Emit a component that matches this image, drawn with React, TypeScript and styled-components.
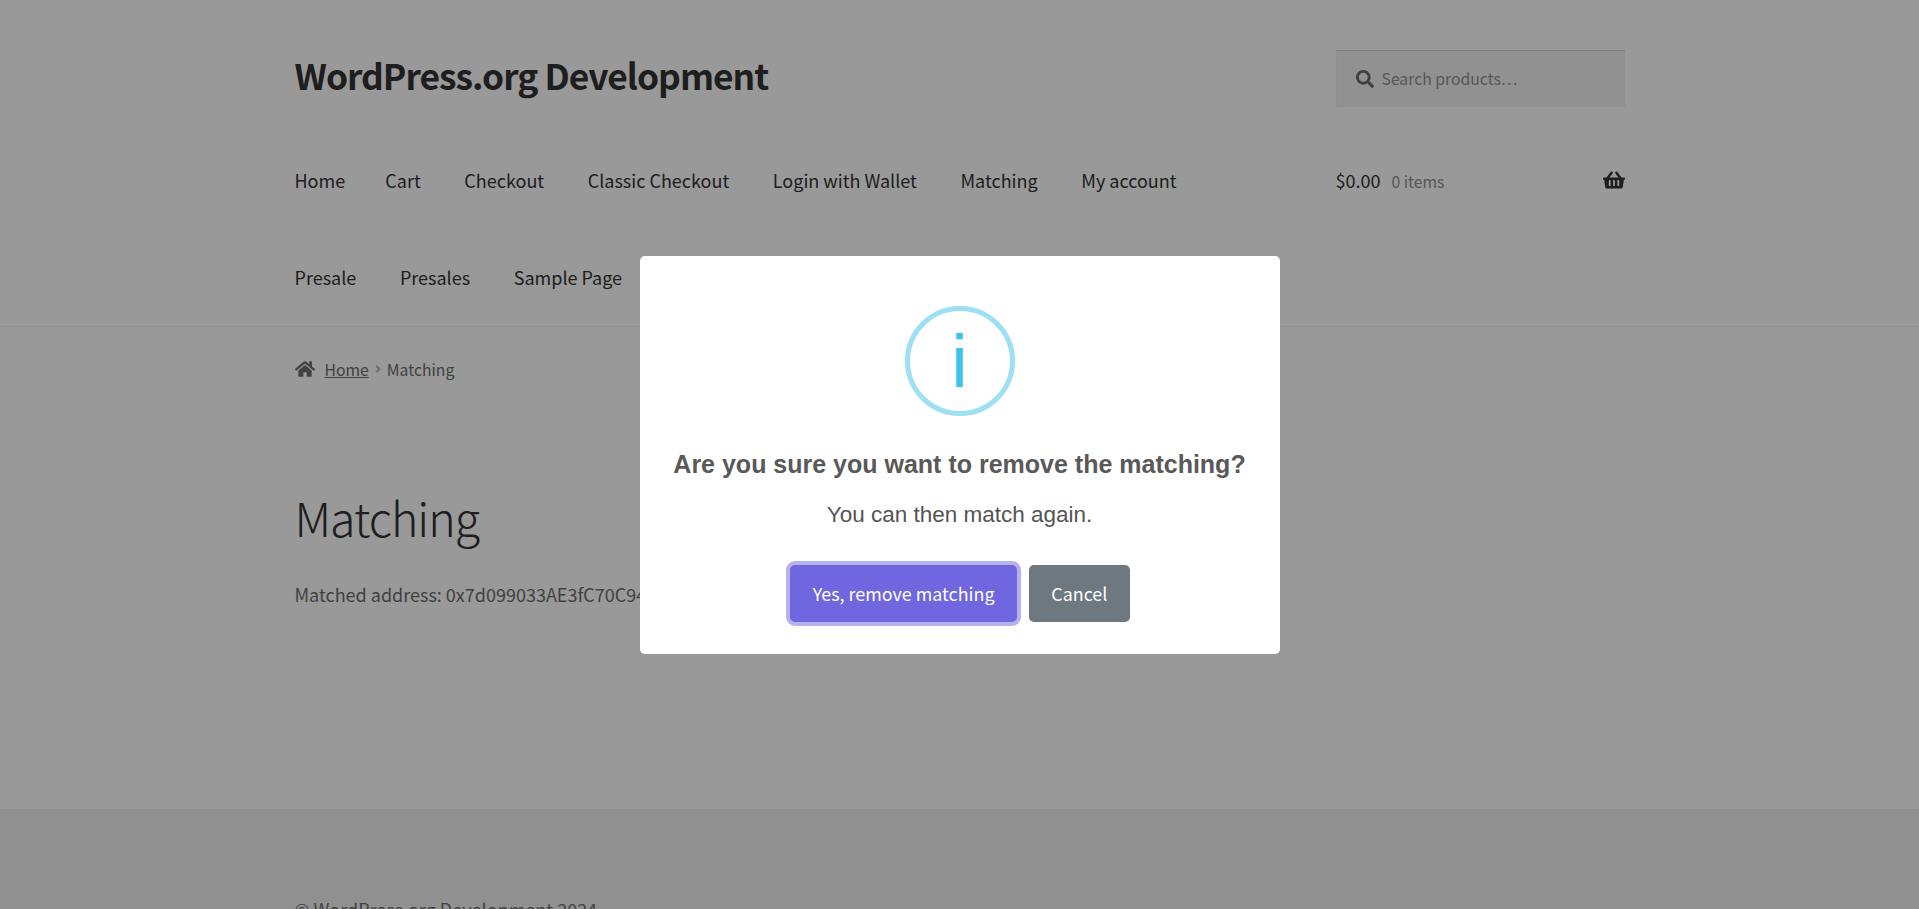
import styled, { createGlobalStyle } from "styled-components";
import { FaAngleRight, FaHome, FaSearch, FaShoppingBasket } from "react-icons/fa";

const GlobalStyle = createGlobalStyle`
  html, body {
    margin: 0;
    height: 100%;
    overflow: hidden;
    background: #fff;
    font-family: "Noto Sans CJK SC", "Noto Sans", sans-serif;
  }
`;

const Wrap = styled.div`
  width: 1330px;
  margin: 0 auto;
`;

const SiteHeader = styled.header`
  height: 327px;
  box-sizing: border-box;
  border-bottom: 1px solid rgba(0, 0, 0, 0.05);
`;

const HeaderRow = styled(Wrap)`
  display: flex;
  justify-content: space-between;
`;

const TopRow = styled(HeaderRow)`
  height: 132px;
  padding-top: 50px;
  box-sizing: border-box;
`;

const SiteTitle = styled.div`
  font-size: 35.4px;
  font-weight: 700;
  line-height: 50px;
  color: #333;
  letter-spacing: -1px;
`;

const SearchBox = styled.div`
  width: 289px;
  height: 57px;
  box-sizing: border-box;
  padding-left: 20px;
  display: flex;
  align-items: center;
  gap: 8px;
  background: #f2f2f2;
  box-shadow: inset 0 1px 1px rgba(0, 0, 0, 0.125);
  color: #6d6d6d;
  svg {
    width: 18px;
    height: 18px;
  }
`;

const Placeholder = styled.span`
  padding-bottom: 1px;
  color: #909090;
  font-size: 15.75px;
`;

const Menu = styled.nav`
  width: 910px;
  display: flex;
  flex-wrap: wrap;
  column-gap: 43.6px;
`;

const MenuLink = styled.a`
  height: 97px;
  line-height: 96px;
  font-size: 18px;
  color: #333;
  &:first-child {
    margin-right: -3.4px;
  }
`;

const Cart = styled.div`
  width: 289px;
  height: 96px;
  display: flex;
  align-items: center;
  font-size: 18px;
  color: #333;
  svg {
    margin-left: auto;
    width: 22px;
    height: 20px;
  }
`;

const CartCount = styled.span`
  margin-left: 11px;
  padding-top: 2px;
  font-size: 15.75px;
  color: #909090;
`;

const Breadcrumb = styled(Wrap)`
  display: flex;
  align-items: center;
  height: 24px;
  padding-top: 30px;
  font-size: 15.75px;
  color: #6d6d6d;
`;

const HomeIcon = styled(FaHome)`
  width: 20px;
  height: 18px;
  margin-right: 10px;
`;

const CrumbLink = styled.a`
  text-decoration: underline;
`;

const CrumbSep = styled(FaAngleRight)`
  width: 8px;
  height: 12px;
  margin: 0 5px;
  opacity: 0.5;
`;

const Main = styled(Wrap)`
  height: 428px;
  box-sizing: border-box;
  padding-top: 101px;
`;

const PageTitle = styled.h1`
  margin: 0;
  font-size: 46.5px;
  font-weight: 300;
  line-height: 70px;
  letter-spacing: -1px;
  color: #333;
`;

const BodyText = styled.p`
  margin: 28px 0 0;
  font-size: 18px;
  line-height: 28px;
  color: #6d6d6d;
`;

const Footer = styled.footer`
  height: 200px;
  background: #f0f0f0;
`;

const FooterText = styled(Wrap)`
  padding-top: 88px;
  font-size: 18px;
  line-height: 24px;
  color: #6d6d6d;
`;

const Overlay = styled.div`
  position: fixed;
  inset: 0;
  display: flex;
  justify-content: center;
  padding-top: 256px;
  background: rgba(0, 0, 0, 0.4);
`;

const Dialog = styled.div`
  width: 640px;
  height: 398px;
  box-sizing: border-box;
  padding-top: 50px;
  display: flex;
  flex-direction: column;
  align-items: center;
  background: #fff;
  border-radius: 5px;
  font-family: "Liberation Sans", Arial, sans-serif;
`;

const InfoIcon = styled.div`
  width: 110px;
  height: 110px;
  box-sizing: border-box;
  border: 5px solid #9de0f6;
  border-radius: 50%;
  display: flex;
  align-items: center;
  justify-content: center;
  color: #3fc3ee;
  font-size: 75px;
  line-height: 1;
`;

const DialogTitle = styled.h2`
  margin: 29px 0 0;
  font-size: 25px;
  font-weight: 700;
  line-height: 38px;
  color: #595959;
`;

const DialogText = styled.div`
  margin-top: 15px;
  font-size: 22.5px;
  line-height: 34px;
  color: #545454;
`;

const Actions = styled.div`
  margin-top: 33px;
  margin-left: 1px;
  display: flex;
  gap: 12px;
`;

const ActionButton = styled.button<{ $bg: string; $focused?: boolean }>`
  height: 57px;
  padding: 0 22.4px 2px;
  border: 0;
  border-radius: 5px;
  background: ${(p) => p.$bg};
  color: #fff;
  font-family: "Noto Sans CJK SC", "Noto Sans", sans-serif;
  font-size: 17.9px;
  box-shadow: ${(p) => (p.$focused ? "0 0 0 4px rgba(112, 102, 224, 0.5)" : "none")};
`;

const navItems = [
  "Home",
  "Cart",
  "Checkout",
  "Classic Checkout",
  "Login with Wallet",
  "Matching",
  "My account",
  "Presale",
  "Presales",
  "Sample Page",
];

export default function App() {
  return (
    <>
      <GlobalStyle />
      <SiteHeader>
        <TopRow>
          <SiteTitle>WordPress.org Development</SiteTitle>
          <SearchBox>
            <FaSearch />
            <Placeholder>Search products…</Placeholder>
          </SearchBox>
        </TopRow>
        <HeaderRow>
          <Menu>
            {navItems.map((item) => (
              <MenuLink key={item}>{item}</MenuLink>
            ))}
          </Menu>
          <Cart>
            $0.00
            <CartCount>0 items</CartCount>
            <FaShoppingBasket />
          </Cart>
        </HeaderRow>
      </SiteHeader>
      <Breadcrumb>
        <HomeIcon />
        <CrumbLink>Home</CrumbLink>
        <CrumbSep />
        Matching
      </Breadcrumb>
      <Main>
        <PageTitle>Matching</PageTitle>
        <BodyText>Matched address: 0x7d099033AE3fC70C94</BodyText>
      </Main>
      <Footer>
        <FooterText>© WordPress.org Development 2024</FooterText>
      </Footer>
      <Overlay>
        <Dialog>
          <InfoIcon>i</InfoIcon>
          <DialogTitle>Are you sure you want to remove the matching?</DialogTitle>
          <DialogText>You can then match again.</DialogText>
          <Actions>
            <ActionButton $bg="#7066e0" $focused>
              Yes, remove matching
            </ActionButton>
            <ActionButton $bg="#6e7881">Cancel</ActionButton>
          </Actions>
        </Dialog>
      </Overlay>
    </>
  );
}
